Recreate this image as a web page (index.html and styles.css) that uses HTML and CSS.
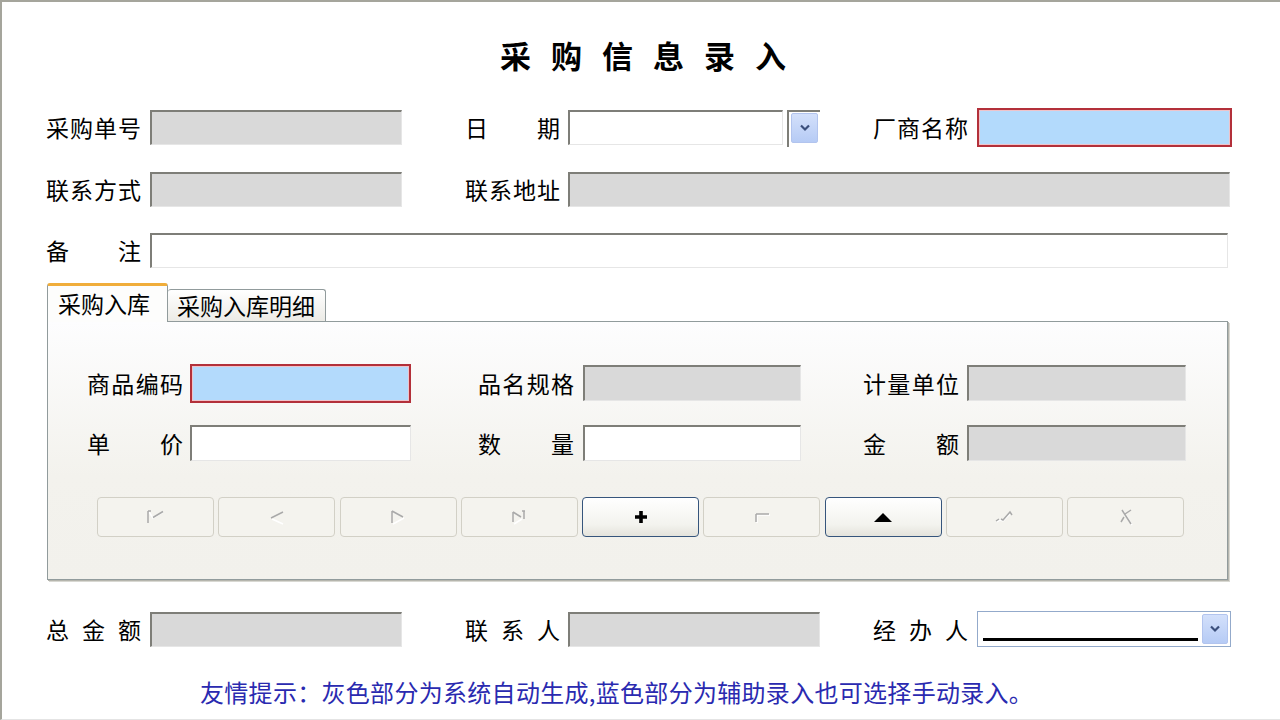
FILE: index.html
```html
<!DOCTYPE html>
<html lang="zh-CN">
<head>
<meta charset="utf-8">
<title>采购信息录入</title>
<link rel="stylesheet" href="styles.css">
</head>
<body>
<div class="frame">
  <h1 class="title">采购信息录入</h1>

  <div class="grid top">
    <label class="lbl">采购单号</label>
    <div class="fld gray"></div>
    <span></span>
    <label class="lbl">日 期</label>
    <div class="date">
      <div class="fld white date-in"></div>
      <div class="date-btn">
        <span class="dd-btn"><svg width="12" height="8" viewBox="0 0 12 8"><polyline points="2,1.5 6,5.5 10,1.5" fill="none" stroke="#3b4f7c" stroke-width="2.2"/></svg></span>
      </div>
    </div>
    <span></span>
    <label class="lbl">厂商名称</label>
    <div class="fld blue"></div>

    <label class="lbl">联系方式</label>
    <div class="fld gray"></div>
    <span></span>
    <label class="lbl">联系地址</label>
    <div class="fld gray span-addr"></div>

    <label class="lbl">备 注</label>
    <div class="fld white span-note"></div>
  </div>

  <div class="tabs">
    <div class="tab active">采购入库</div>
    <div class="tab">采购入库明细</div>
  </div>
  <div class="panel">
    <div class="grid inner">
      <label class="lbl">商品编码</label>
      <div class="fld blue"></div>
      <span></span>
      <label class="lbl">品名规格</label>
      <div class="fld gray"></div>
      <span></span>
      <label class="lbl">计量单位</label>
      <div class="fld gray"></div>

      <label class="lbl">单 价</label>
      <div class="fld white"></div>
      <span></span>
      <label class="lbl">数 量</label>
      <div class="fld white"></div>
      <span></span>
      <label class="lbl">金 额</label>
      <div class="fld gray"></div>
    </div>

    <div class="btns">
      <button class="btn" disabled><svg width="24" height="16" viewBox="0 0 24 16"><path d="M5 3 L9 9 L19 3" fill="none" stroke="#fff" stroke-width="1.5"/><path d="M4 2 V14 M4 2 H7 M9 8.5 L19 2.5" fill="none" stroke="#a9a9a9" stroke-width="1.5"/></svg></button>
      <button class="btn" disabled><svg width="24" height="16" viewBox="0 0 24 16"><path d="M7 10 L18 15" fill="none" stroke="#fff" stroke-width="1.5"/><path d="M6 9 L18 3" fill="none" stroke="#a9a9a9" stroke-width="1.5"/></svg></button>
      <button class="btn" disabled><svg width="24" height="16" viewBox="0 0 24 16"><path d="M7 15 L18 9" fill="none" stroke="#fff" stroke-width="1.5"/><path d="M6 2 V14 M6 2 L17 8" fill="none" stroke="#a9a9a9" stroke-width="1.5"/></svg></button>
      <button class="btn" disabled><svg width="24" height="16" viewBox="0 0 24 16"><path d="M7 15 L15 10" fill="none" stroke="#fff" stroke-width="1.5"/><path d="M6 3 V13 M6 3 L14 8 M17 2 V10 M15 2 H18" fill="none" stroke="#a9a9a9" stroke-width="1.5"/></svg></button>
      <button class="btn on"><svg width="14" height="14" viewBox="0 0 14 14"><path d="M7 1 V13 M1 7 H13" fill="none" stroke="#000" stroke-width="3.6"/></svg></button>
      <button class="btn" disabled><svg width="24" height="16" viewBox="0 0 24 16"><path d="M7 14 V6 M7 6 H20" fill="none" stroke="#fff" stroke-width="1.5"/><path d="M6 13 V5 M6 5 H19" fill="none" stroke="#a9a9a9" stroke-width="1.5"/></svg></button>
      <button class="btn on"><svg width="18" height="9" viewBox="0 0 18 9"><polygon points="0,9 9,0 18,9" fill="#000"/></svg></button>
      <button class="btn" disabled><svg width="24" height="16" viewBox="0 0 24 16"><path d="M5 13 L8 11 L11 12 L19 4" fill="none" stroke="#fff" stroke-width="1.5"/><path d="M4 12 L7 10 M9 10 L11 11 L18 3 L20 6" fill="none" stroke="#a9a9a9" stroke-width="1.5"/></svg></button>
      <button class="btn" disabled><svg width="24" height="18" viewBox="0 0 24 18"><path d="M9 3 L18 17" fill="none" stroke="#fff" stroke-width="1.5"/><path d="M8 2 L17 16 M17 2 L11 6 M10 9 L7 14" fill="none" stroke="#a9a9a9" stroke-width="1.5"/></svg></button>
    </div>
  </div>

  <div class="grid bottom">
    <label class="lbl">总 金 额</label>
    <div class="fld gray"></div>
    <span></span>
    <label class="lbl">联 系 人</label>
    <div class="fld gray"></div>
    <span></span>
    <label class="lbl">经 办 人</label>
    <div class="select">
      <span class="sel-line"></span>
      <span class="dd-btn sel-btn"><svg width="12" height="8" viewBox="0 0 12 8"><polyline points="2,1.5 6,5.5 10,1.5" fill="none" stroke="#3b4f7c" stroke-width="2.2"/></svg></span>
    </div>
  </div>

  <p class="tip">友情提示：灰色部分为系统自动生成,蓝色部分为辅助录入也可选择手动录入。</p>
</div>
</body>
</html>
```
FILE: styles.css
```css
* { box-sizing: border-box; }
html, body { margin: 0; padding: 0; background: #fff; }
body {
  font-family: "Noto Sans CJK SC", "Noto Sans", sans-serif;
  color: #000;
}
.frame {
  width: 1280px;
  height: 720px;
  border-top: 2px solid #a5a59c;
  border-left: 2px solid #a5a59c;
  border-bottom: 1px solid #e4e4e4;
  overflow: hidden;
}
.title {
  margin: 0;
  padding: 33px 0 0 24px;
  font-size: 31px;
  line-height: 40px;
  font-weight: bold;
  letter-spacing: 20px;
  text-align: center;
}
.grid {
  display: grid;
  align-items: center;
}
.top, .bottom {
  margin-left: 44px;
  grid-template-columns: 104px 252px 63px 103px 252px 53px 104px 255px;
  grid-auto-rows: 35px;
}
.top { margin-top: 35px; row-gap: 26.5px; }
.bottom { margin-top: 31px; grid-auto-rows: 36px; }
.lbl {
  display: block;
  width: 95px;
  font-size: 23px;
  line-height: 35px;
  text-align: justify;
  text-align-last: justify;
  white-space: nowrap;
}
.fld { height: 35px; }
.gray {
  background: #d9d9d9;
  border-top: 2px solid #7e7e78;
  border-left: 2px solid #7e7e78;
  border-right: 1px solid #e6e6e6;
  border-bottom: 1px solid #e6e6e6;
}
.white {
  background: #fff;
  border-top: 2px solid #7e7e78;
  border-left: 2px solid #7e7e78;
  border-right: 1px solid #e6e6e6;
  border-bottom: 1px solid #e6e6e6;
}
.blue {
  height: 39px;
  margin: -2px 0;
  background: #b3dafc;
  border: 2px solid #b3303a;
  box-shadow: inset 0 0 0 1px #efc3ca;
}
.span-addr { grid-column: span 4; margin-right: 2px; }
.span-note { grid-column: span 7; margin-right: 4px; }

.date { display: flex; gap: 4px; height: 35px; }
.date-in { width: 215px; }
.date-btn {
  width: 33px;
  height: 37px;
  border-top: 2px solid #7e7e78;
  border-left: 2px solid #7e7e78;
  padding: 1px 0 0 2px;
}
.dd-btn {
  display: flex;
  align-items: center;
  justify-content: center;
  width: 27px;
  height: 30px;
  background: linear-gradient(#d3e0fb, #b6cbf5);
  border: 1px solid #b2c4ee;
  border-radius: 2px;
}

.tabs {
  display: flex;
  align-items: flex-end;
  margin: 15px 0 0 45px;
  height: 38px;
  position: relative;
  z-index: 1;
}
.tab {
  font-size: 23px;
  line-height: 30px;
  height: 32px;
  padding: 0 10px 0 9px;
  border: 1px solid #919b9c;
  border-bottom: none;
  border-radius: 3px 3px 0 0;
  background: linear-gradient(#ffffff, #ecebe6);
  white-space: nowrap;
}
.tab.active {
  height: 39px;
  margin-bottom: -1px;
  padding: 2px 10px 0 10px;
  width: 121px;
  border-top: 3px solid #f0ad3a;
  background: #fdfdfc;
}
.tab + .tab { border-left: none; }
.panel {
  margin-left: 45px;
  width: 1181px;
  height: 259px;
  border: 1px solid #919b9c;
  box-shadow: 1px 1px 0 #b5b5ad, 2px 2px 0 #d8d8d2;
  background: linear-gradient(#fdfdfe, #f3f2ed 60%, #f2f1ec);
  padding: 43px 0 0 39px;
}
.inner {
  grid-template-columns: 103px 221px 67px 105px 218px 62px 104px 219px;
  grid-auto-rows: 36px;
  row-gap: 24px;
}
.inner .fld:not(.blue) { height: 36px; }
.inner .lbl { width: 96px; line-height: 36px; }

.btns {
  display: grid;
  grid-template-columns: repeat(9, 117px);
  column-gap: 4.25px;
  margin: 36px 0 0 10px;
}
.btn {
  height: 40px;
  padding: 0;
  display: flex;
  align-items: center;
  justify-content: center;
  border: 1px solid #d2d0c6;
  border-radius: 4px;
  background: #f4f3ee;
  font: inherit;
}
.btn.on {
  border: 1px solid #36557c;
  background: linear-gradient(#ffffff, #f3f3ee 70%, #e4e3dc);
}

.select {
  display: flex;
  align-items: center;
  height: 36px;
  margin-right: 1px;
  border: 1px solid #93aacb;
  background: #fff;
  padding: 0 2px 0 5px;
  gap: 4px;
}
.sel-line {
  flex: 1;
  height: 3px;
  margin-top: 21px;
  background: #000;
}
.sel-btn { width: 26px; height: 30px; }

.tip {
  margin: 30px 0 0 198px;
  font-size: 24px;
  line-height: 30px;
  letter-spacing: 0.3px;
  color: #2a2ab0;
  white-space: nowrap;
}
```
